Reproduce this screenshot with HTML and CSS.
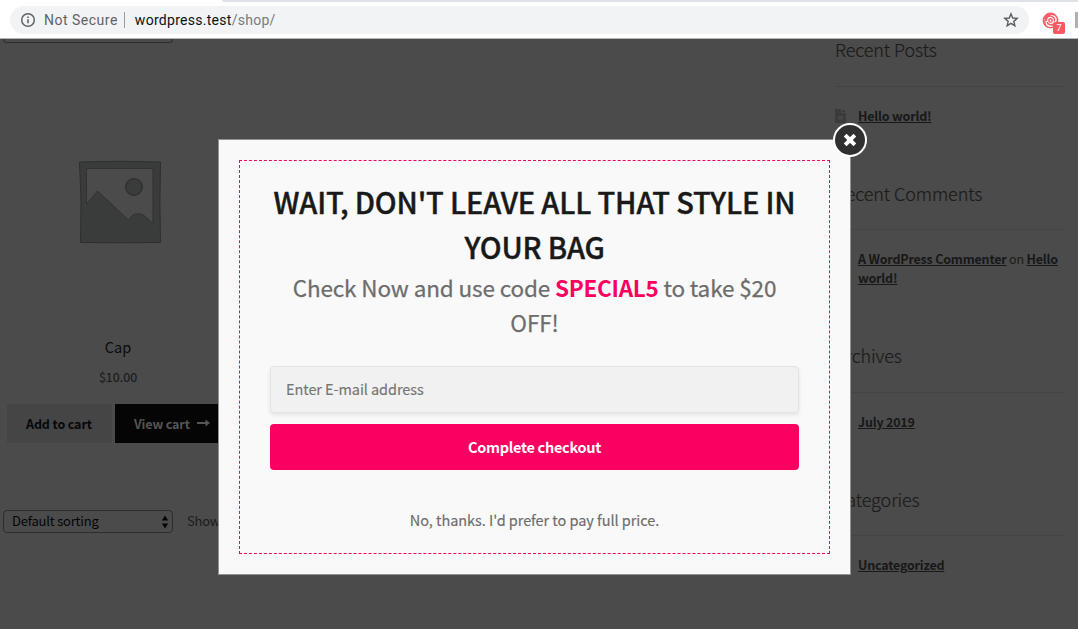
FILE: index.html
```html
<!DOCTYPE html>
<html lang="en">
<head>
<meta charset="utf-8">
<title>Shop</title>
<link rel="stylesheet" href="styles.css">
</head>
<body>
<header class="toolbar">
  <div class="tab-strip"></div>
  <div class="address">
    <svg class="info" viewBox="0 0 16 16" width="16" height="16"><circle cx="8" cy="8" r="6.3" fill="none" stroke="#5f6368" stroke-width="1.5"/><path d="M8 7.2v4M8 4.5v1.6" stroke="#5f6368" stroke-width="1.6"/></svg>
    <span class="secure">Not Secure</span>
    <span class="url">wordpress.test<span class="path">/shop/</span></span>
    <svg class="star" viewBox="0 0 16 16" width="16" height="16"><path d="M8 1.900l1.750 4.100 4.450.4-3.400 2.950 1.050 4.350L8 11.400l-3.850 2.300L5.200 9.350 1.800 6.400l4.450-.4z" fill="none" stroke="#5a5e63" stroke-width="1.4"/></svg>
  </div>
  <div class="extension">
    <svg viewBox="0 0 18 18" width="18" height="18" fill="none" stroke="#fb5d67" stroke-width="1.4"><circle cx="8.500" cy="8.500" r="7.200"/><circle cx="8.500" cy="8.500" r="1.700"/><path d="M4.500 9C3.800 5.500 7 3.300 9.500 4.300c2.300.8 3.500 3 2.800 5.200M1.500 7C4 3 9 .8 13 3.500M15.500 7c.5 4-3 6.500-6.500 5.800M4 14.500C1.500 10 3 5.500 6 4.200M5 10c.8 2.600 4 3.600 6.500 1.700"/></svg>
    <span class="count">7</span>
  </div>
  <div class="cut-icon"></div>
</header>
<main class="page">
  <section class="shop">
    <div class="select-edge"></div>
    <article class="product">
      <svg class="thumb" viewBox="0 0 84 84" width="84" height="84"><path d="M1.500 2l40-.8L82.500 2l-.6 40 .6 40.500-41 .3-39-.3L3 42z" fill="#3a3c3c" stroke="#2e2f2f"/><path d="M8.500 8.500h66.500v55L66 55.500c-4-2.500-9-2-12 .2L50.500 60 19.500 31 8.500 44z" fill="#4b4b4b" stroke="#303131"/><circle cx="56" cy="27" r="8.300" fill="#3a3c3c" stroke="#2d2e2e" stroke-width="1.300"/></svg>
      <h2 class="name">Cap</h2>
      <p class="price">$10.00</p>
      <div class="actions">
        <a class="btn add">Add to cart</a>
        <a class="btn view">View cart <svg viewBox="0 0 14 8" width="14" height="8"><path d="M0 4h9" stroke="#555" stroke-width="2"/><path d="M8.500.5L13 4 8.500 7.500z" fill="#555"/></svg></a>
      </div>
    </article>
    <div class="sorting">
      <div class="select">Default sorting <svg viewBox="0 0 8 14" width="8" height="14"><path d="M4 .5l3.200 5H.8zM4 13.500l3.200-5H.8z" fill="#050505"/></svg></div>
      <span class="result">Showing</span>
    </div>
  </section>
  <aside class="sidebar">
    <section class="widget">
      <h3>Recent Posts</h3>
      <p class="with-icon"><svg class="doc" viewBox="0 0 11 14" width="11" height="14"><path d="M0 0h6v4h5v10H0zM7 0l4 3.300H7z" fill="#3b3b3b"/><path d="M3 7h5v3.500H3z" fill="#474747"/></svg><a>Hello world!</a></p>
    </section>
    <section class="widget comments"><h3>Recent Comments</h3><p><a>A WordPress Commenter</a> on <a>Hello world!</a></p></section>
    <section class="widget archives"><h3>Archives</h3><p><a>July 2019</a></p></section>
    <section class="widget"><h3>Categories</h3><p><a>Uncategorized</a></p></section>
  </aside>
</main>
<div class="modal">
  <div class="offer">
    <h1>WAIT, DON'T LEAVE ALL THAT STYLE IN<br>YOUR BAG</h1>
    <p class="lead">Check Now and use code <strong>SPECIAL5</strong> to take $20<br>OFF!</p>
    <div class="field">Enter E-mail address</div>
    <div class="submit">Complete checkout</div>
    <p class="decline">No, thanks. I'd prefer to pay full price.</p>
  </div>
  <div class="close"><svg viewBox="0 0 14 14" width="14" height="14"><path d="M2.200 2.200l9.600 9.600M11.800 2.200l-9.600 9.600" stroke="#fff" stroke-width="4"/></svg></div>
</div>
</body>
</html>
```
FILE: styles.css
```css
* { box-sizing: border-box; }
body, h1, h2, h3, p { margin: 0; }
body {
  position: relative;
  width: 1078px;
  height: 629px;
  overflow: hidden;
  background: #4b4b4b;
  font-family: "Noto Sans CJK SC", "Noto Sans", sans-serif;
}
.toolbar {
  position: relative;
  display: flex;
  height: 39px;
  padding: 6px 0 0 10px;
  background: #fff;
  border-bottom: 1px solid #b4b6b5;
}
.tab-strip {
  position: absolute;
  top: 0;
  left: 222px;
  right: 0;
  height: 2px;
  background: #dee1e6;
  border-bottom-left-radius: 4px;
}
.address {
  display: flex;
  flex: none;
  align-items: center;
  width: 1019px;
  height: 28px;
  padding: 0 10px;
  border-radius: 14px;
  background: #f1f3f4;
  font: 14px/28px Roboto, sans-serif;
  letter-spacing: 0.28px;
}
.secure {
  margin-left: 8px;
  padding-right: 6px;
  border-right: 1px solid #9a9da0;
  line-height: 16px;
  letter-spacing: 0.5px;
  color: #5f6368;
}
.url { margin-left: 10px; color: #101114; }
.path { color: #777b80; }
.star { margin-left: auto; }
.extension { flex: none; position: relative; margin: 5px 0 0 13px; width: 24px; }
.count {
  position: absolute;
  left: 11px;
  top: 11px;
  width: 12px;
  height: 12px;
  border-radius: 2px;
  background: #fb5962;
  color: #fff;
  font: 9px/12px Roboto, sans-serif;
  text-align: center;
}
.cut-icon { flex: none; margin: 6px 0 0 9px; width: 4px; height: 16px; background: #aeb0b2; }
.page { display: flex; height: 590px; }
.shop { width: 835px; }
.select-edge {
  width: 170px;
  height: 4px;
  margin-left: 3px;
  border: 1px solid #2e2e2e;
  border-top: 0;
  border-radius: 0 0 4px 4px;
}
.product { width: 236px; padding-top: 117px; text-align: center; }
.thumb { display: block; margin-left: 78px; }
.name { margin-top: 91px; font-size: 14.5px; line-height: 24px; font-weight: 400; color: #0a0a0a; }
.price { margin-top: 8px; font-size: 12.5px; line-height: 20px; color: #1c1c1c; -webkit-text-stroke: 0.2px; }
.actions { display: flex; gap: 3px; margin: 17px 0 0 7px; }
.btn {
  display: flex;
  align-items: center;
  height: 39px;
  padding: 0 19px 1px;
  font-size: 12.5px;
  font-weight: 700;
  letter-spacing: -0.12px;
  white-space: nowrap;
}
.add { width: 105px; background: #454545; color: #080808; }
.view { width: 114px; gap: 7px; background: #050505; color: #555; }
.btn svg { flex: none; }
.sorting { display: flex; align-items: center; gap: 14px; margin: 67px 0 0 3px; font-size: 13px; letter-spacing: -0.2px; color: #1c1c1c; }
.result { padding-bottom: 2px; }
.select {
  display: flex;
  align-items: center;
  justify-content: space-between;
  width: 170px;
  height: 23px;
  padding: 0 3px 2px 8px;
  border: 1px solid #2d2d2d;
  border-radius: 4px;
  color: #050505;
}
.select svg { position: relative; top: 1px; }
.sidebar { width: 229px; color: #1b1b1b; }
.widget { height: 144px; }
.widget.comments { height: 162px; }
.widget h3 {
  height: 48px;
  border-bottom: 1px solid #444;
  font-size: 18px;
  line-height: 20px;
  font-weight: 300;
  letter-spacing: -0.1px;
  -webkit-text-stroke: 0.2px;
}
.widget p { padding: 19px 0 0 23px; font-size: 12.5px; line-height: 19px; letter-spacing: -0.2px; }
.widget:nth-child(n+2) h3 { height: 47px; }
.widget.archives h3 { height: 48px; }
.widget a { font-weight: 700; text-decoration: underline; color: #181818; }
.widget .with-icon { display: flex; align-items: center; gap: 12px; padding-left: 0; }
.doc { flex: none; }
.modal {
  position: absolute;
  left: 218px;
  top: 139px;
  width: 633px;
  height: 436px;
  padding: 20px;
  border: 1px solid #929292;
  background: #f9f9f9;
}
.offer {
  height: 394px;
  padding: 18px 30px;
  border: 1px dashed #f4005f;
  text-align: center;
}
.offer h1 {
  font-size: 29px;
  line-height: 45px;
  font-weight: 500;
  letter-spacing: -0.17px;
  color: #191919;
  white-space: nowrap;
  -webkit-text-stroke: 0.4px;
}
.lead {
  margin-top: 1px;
  font-size: 22.5px;
  line-height: 35px;
  letter-spacing: -0.13px;
  color: #6d6d6d;
  white-space: nowrap;
  -webkit-text-stroke: 0.25px;
}
.lead strong { font-weight: 700; color: #fa0060; letter-spacing: -0.3px; -webkit-text-stroke: 0; }
.field {
  height: 47px;
  margin-top: 26px;
  padding-left: 15px;
  border: 1px solid #e4e4e4;
  border-radius: 4px;
  background: #f1f1f1;
  box-shadow: 0 2px 4px rgba(0, 0, 0, 0.09);
  font-size: 14.5px;
  line-height: 43px;
  letter-spacing: -0.08px;
  text-align: left;
  color: #757575;
  -webkit-text-stroke: 0.15px;
}
.submit {
  height: 46px;
  margin-top: 11px;
  border-radius: 4px;
  background: #fa0060;
  color: #fff;
  font-size: 14.5px;
  line-height: 46px;
  font-weight: 700;
  letter-spacing: -0.3px;
}
.decline { margin-top: 38px; font-size: 14.5px; line-height: 23px; letter-spacing: -0.05px; color: #6d6d6d; -webkit-text-stroke: 0.15px; }
.close {
  position: absolute;
  top: -17px;
  left: 614px;
  display: flex;
  align-items: center;
  justify-content: center;
  width: 34px;
  height: 34px;
  border: 2px solid #fff;
  border-radius: 50%;
  background: #303030;
}
```
